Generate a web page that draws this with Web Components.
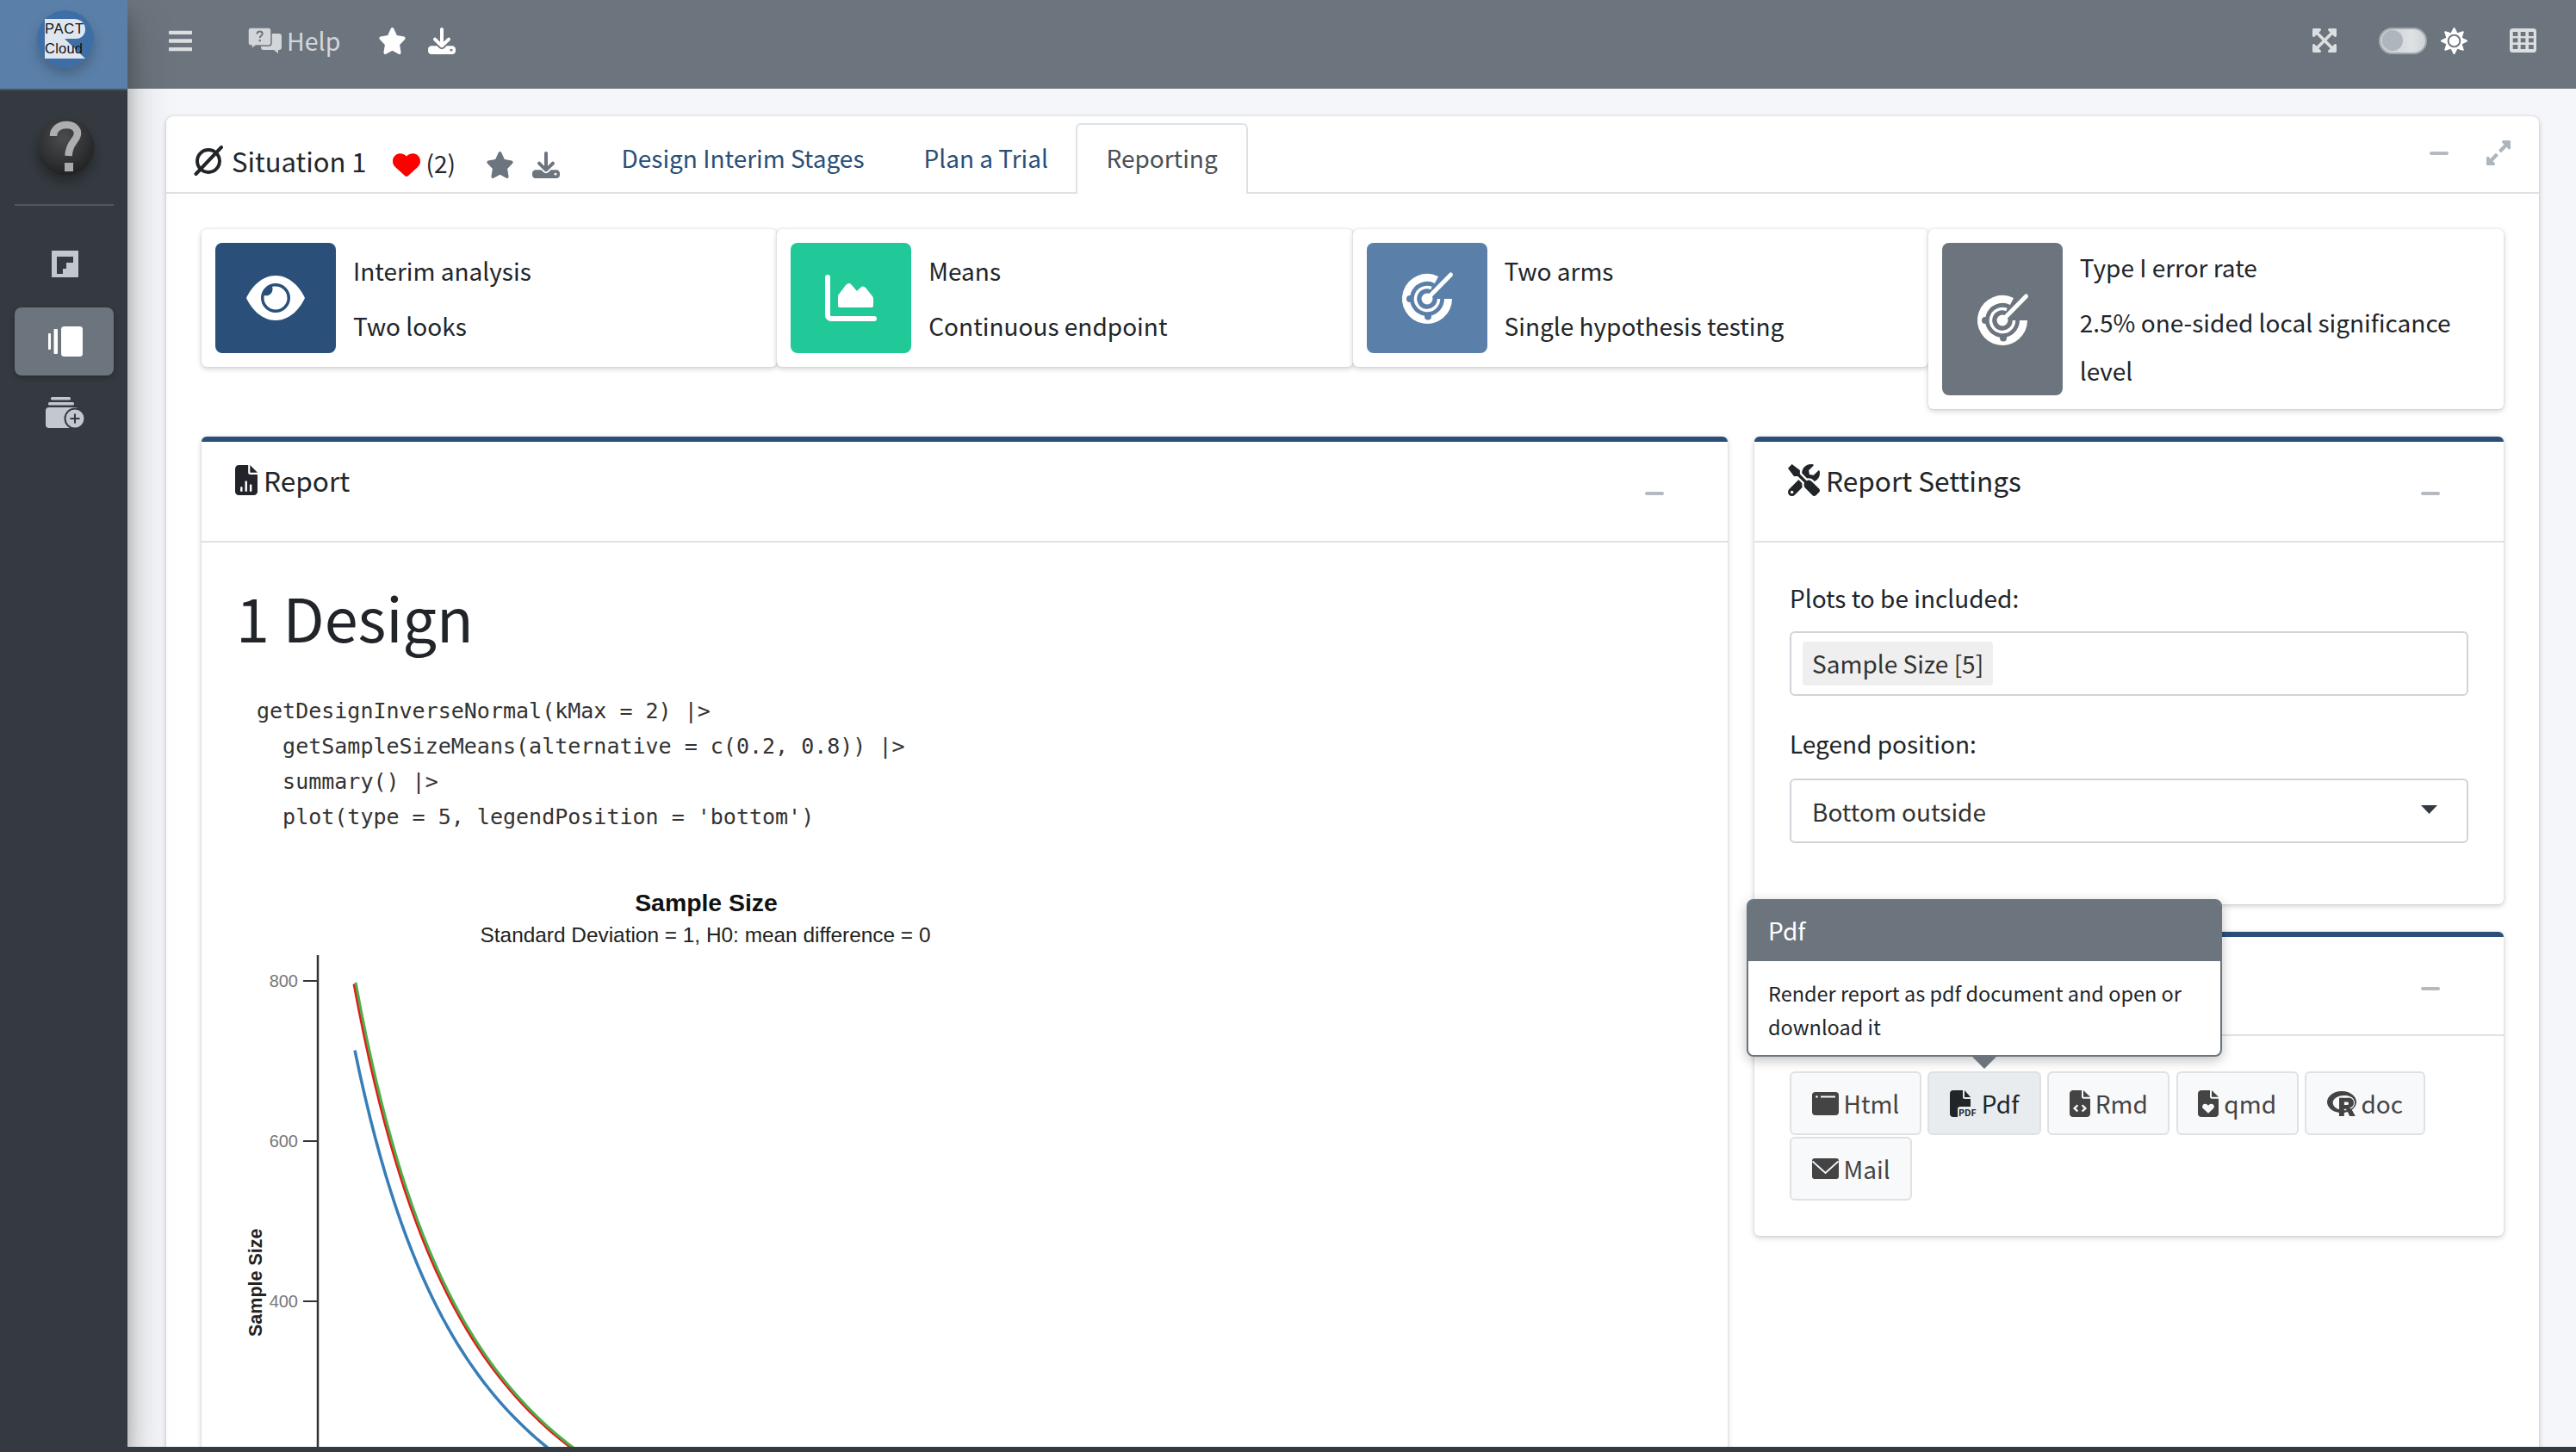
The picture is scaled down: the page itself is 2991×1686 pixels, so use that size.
<!DOCTYPE html>
<html lang="en">
<head>
<meta charset="utf-8">
<title>PACT Cloud</title>
<style>
    html, body { margin: 0; padding: 0; background: #f4f6f9; }
    body { font-family: "Noto Sans CJK SC", "Source Sans Pro", "Noto Sans", sans-serif; font-size: 28px; color: #212529; }
</style>
</head>
<body>

<pact-app>
    <pact-sidebar slot="side"></pact-sidebar>
    <pact-topbar slot="top"></pact-topbar>

    <pact-main-card>
        <pact-icon slot="title-icon" name="emptyset" w="34" h="35"></pact-icon>
        <span slot="title">Situation 1</span>

        <pact-tab slot="tabs">Design Interim Stages</pact-tab>
        <pact-tab slot="tabs">Plan a Trial</pact-tab>
        <pact-tab slot="tabs" active>Reporting</pact-tab>

        <pact-info-row>
            <pact-info-box bg="#2a4f78">
                <pact-icon slot="icon" name="eye" w="68" h="52"></pact-icon>
                <span>Interim analysis</span>
                <span slot="detail">Two looks</span>
            </pact-info-box>
            <pact-info-box bg="#20c997">
                <pact-icon slot="icon" name="chart" w="60" h="54"></pact-icon>
                <span>Means</span>
                <span slot="detail">Continuous endpoint</span>
            </pact-info-box>
            <pact-info-box bg="#5a7fa8">
                <pact-icon slot="icon" name="target" w="110" h="90"></pact-icon>
                <span>Two arms</span>
                <span slot="detail">Single hypothesis testing</span>
            </pact-info-box>
            <pact-info-box bg="#6c757d">
                <pact-icon slot="icon" name="target" w="110" h="90"></pact-icon>
                <span>Type I error rate</span>
                <span slot="detail">2.5% one-sided local significance level</span>
            </pact-info-box>
        </pact-info-row>

        <pact-columns>
            <pact-card slot="left" tall>
                <pact-icon slot="icon" name="filechart" w="26" h="35"></pact-icon>
                <span slot="title">Report</span>
                <pact-report></pact-report>
            </pact-card>

            <pact-card slot="right">
                <pact-icon slot="icon" name="tools" w="37" h="37"></pact-icon>
                <span slot="title">Report Settings</span>
                <pact-field label="Plots to be included:"><pact-chip>Sample Size [5]</pact-chip></pact-field>
                <pact-field label="Legend position:" select>Bottom outside</pact-field>
            </pact-card>

            <pact-card slot="right" class="downloads">
                <pact-button>
                    <pact-icon slot="icon" name="window" w="31" h="27"></pact-icon>Html
                </pact-button>
                <pact-button hover>
                    <pact-icon slot="icon" name="filepdf" w="31" h="31"></pact-icon>Pdf
                </pact-button>
                <pact-button>
                    <pact-icon slot="icon" name="filecode" w="24" h="31"></pact-icon>Rmd
                </pact-button>
                <pact-button>
                    <pact-icon slot="icon" name="fileheart" w="24" h="31"></pact-icon>qmd
                </pact-button>
                <pact-button>
                    <pact-icon slot="icon" name="rproject" w="34" h="29"></pact-icon>doc
                </pact-button>
                <pact-button>
                    <pact-icon slot="icon" name="mail" w="31" h="24"></pact-icon>Mail
                </pact-button>
                <pact-popover slot="overlay" heading="Pdf">Render report as pdf document and open or download it</pact-popover>
            </pact-card>
        </pact-columns>
    </pact-main-card>
</pact-app>

<script>
const FILE = 'M0 64C0 28.7 28.7 0 64 0H224V128c0 17.7 14.3 32 32 32H384V448c0 35.3-28.7 64-64 64H64c-35.3 0-64-28.7-64-64V64zm384 64H256V0L384 128z';

const ICONS = {
    bars: { box: '0 0 448 512', body: '<path d="M16 132h416c8.837 0 16-7.163 16-16V76c0-8.837-7.163-16-16-16H16C7.163 60 0 67.163 0 76v40c0 8.837 7.163 16 16 16zm0 160h416c8.837 0 16-7.163 16-16v-40c0-8.837-7.163-16-16-16H16c-8.837 0-16 7.163-16 16v40c0 8.837 7.163 16 16 16zm0 160h416c8.837 0 16-7.163 16-16v-40c0-8.837-7.163-16-16-16H16c-8.837 0-16 7.163-16 16v40c0 8.837 7.163 16 16 16z"/>' },
    star: { box: '0 0 576 512', body: '<path d="M316.9 18C311.6 7 300.4 0 288.1 0s-23.4 7-28.8 18L195 150.3 51.4 171.5c-12 1.8-22 10.2-25.7 21.7s-.7 24.2 7.9 32.7L137.8 329 113.2 474.7c-2 12 3 24.2 12.9 31.3s23 8 33.8 2.3l128.3-68.5 128.3 68.5c10.8 5.7 23.9 4.9 33.8-2.3s14.9-19.3 12.9-31.3L438.5 329 542.7 225.9c8.6-8.5 11.7-21.2 7.9-32.7s-13.7-19.9-25.7-21.7L381.2 150.3 316.9 18z"/>' },
    download: { box: '0 0 512 512', body: '<path d="M288 32c0-17.7-14.3-32-32-32s-32 14.3-32 32V274.7l-73.4-73.4c-12.5-12.5-32.8-12.5-45.3 0s-12.5 32.8 0 45.3l128 128c12.5 12.5 32.8 12.5 45.3 0l128-128c12.5-12.5 12.5-32.8 0-45.3s-32.8-12.5-45.3 0L288 274.7V32zM64 352c-35.3 0-64 28.7-64 64v32c0 35.3 28.7 64 64 64H448c35.3 0 64-28.7 64-64V416c0-35.3-28.7-64-64-64H346.5l-45.3 45.3c-25 25-65.5 25-90.5 0L165.5 352H64zm368 56a24 24 0 1 1 0 48 24 24 0 1 1 0-48z"/>' },
    heart: { box: '0 40 512 440', body: '<path d="M47.6 300.4L228.3 469.1c7.5 7 17.4 10.9 27.7 10.9s20.2-3.9 27.7-10.9L464.4 300.4c30.4-28.3 47.6-68 47.6-109.5v-5.8c0-69.9-50.5-129.5-119.4-141C347 36.5 300.6 51.4 268 84L256 96 244 84c-32.6-32.6-79-47.5-124.6-39.9C50.5 55.6 0 115.2 0 185.1v5.8c0 41.5 17.2 81.2 47.6 109.5z"/>' },
    help: { box: '0 0 39 30', body: `
        <path d="M18 7h18a3 3 0 0 1 3 3v13a3 3 0 0 1-3 3h-1v4l-5-4H18a3 3 0 0 1-3-3V10a3 3 0 0 1 3-3z"/>
        <path d="M3 0h21a3 3 0 0 1 3 3v15a3 3 0 0 1-3 3H9l-5 4v-4H3a3 3 0 0 1-3-3V3a3 3 0 0 1 3-3z" stroke="#6c757d" stroke-width="1.5"/>
        <path d="M10.500 7.500c0-2 1.500-3 3.200-3s3 1 3 2.700c0 2.300-3 2.300-3 4.800" fill="none" stroke="#6c757d" stroke-width="2"/>
        <circle cx="13.700" cy="15" r="1.300" fill="#6c757d"/>` },
    expandarrows: { box: '0 0 448 512', body: '<path d="M448 344v112a23.94 23.94 0 0 1-24 24H312c-21.39 0-32.09-25.9-17-41l36.2-36.2L224 295.6 116.77 402.9 153 439c15.09 15.1 4.39 41-17 41H24a23.94 23.94 0 0 1-24-24V344c0-21.4 25.89-32.1 41-17l36.19 36.2L184.46 256 77.18 148.7 41 185c-15.1 15.1-41 4.4-41-17V56a23.94 23.94 0 0 1 24-24h112c21.39 0 32.09 25.9 17 41l-36.2 36.2L224 216.4l107.23-107.3L295 73c-15.09-15.1-4.39-41 17-41h112a23.94 23.94 0 0 1 24 24v112c0 21.4-25.89 32.1-41 17l-36.19-36.2L263.54 256l107.28 107.3L407 327.1c15.1-15.2 41-4.5 41 16.9z"/>' },
    expandalt: { box: '0 32 448 448', body: '<path d="M212.686 315.314L120 408l32.922 31.029c15.12 15.12 4.412 40.971-16.97 40.971h-112C10.697 480 0 469.255 0 456V344c0-21.382 25.803-32.09 40.922-16.971L72 360l92.686-92.686c6.248-6.248 16.379-6.248 22.627 0l25.373 25.373c6.249 6.248 6.249 16.378 0 22.627zm22.628-118.628L328 104l-32.922-31.029C279.958 57.851 290.666 32 312.048 32h112C437.303 32 448 42.745 448 56v112c0 21.382-25.803 32.09-40.922 16.971L376 152l-92.686 92.686c-6.248 6.248-16.379 6.248-22.627 0l-25.373-25.373c-6.249-6.248-6.249-16.378 0-22.627z"/>' },
    sun: { box: '0 0 512 512', body: '<path d="M256 160c-52.9 0-96 43.1-96 96s43.1 96 96 96 96-43.1 96-96-43.1-96-96-96zm246.4 80.5l-94.7-47.3 33.5-100.4c4.5-13.6-8.4-26.5-21.9-21.9l-100.4 33.5-47.4-94.8c-6.4-12.8-24.6-12.8-31 0l-47.3 94.7L92.7 70.8c-13.6-4.5-26.5 8.4-21.9 21.9l33.5 100.4-94.7 47.4c-12.8 6.4-12.8 24.6 0 31l94.7 47.3-33.5 100.5c-4.5 13.6 8.4 26.5 21.9 21.9l100.4-33.5 47.3 94.7c6.4 12.8 24.6 12.8 31 0l47.3-94.7 100.4 33.5c13.6 4.5 26.5-8.4 21.9-21.9l-33.5-100.4 94.7-47.3c13-6.5 13-24.7.2-31.1zm-155.9 106c-49.9 49.9-131.1 49.9-181 0-49.9-49.9-49.9-131.1 0-181 49.9-49.9 131.1-49.9 181 0 49.9 49.9 49.9 131.1 0 181z"/>' },
    grid: { box: '0 0 31 28', body: `
        <rect width="31" height="28" rx="3.500"/>
        <g fill="#6c757d">
            <rect x="3.700" y="4" width="5.700" height="5"/><rect x="12.700" y="4" width="5.700" height="5"/><rect x="22" y="4" width="5.700" height="5"/>
            <rect x="3.700" y="11.300" width="5.700" height="5"/><rect x="12.700" y="11.300" width="5.700" height="5"/><rect x="22" y="11.300" width="5.700" height="5"/>
            <rect x="3.700" y="19" width="5.700" height="5"/><rect x="12.700" y="19" width="5.700" height="5"/><rect x="22" y="19" width="5.700" height="5"/>
        </g>` },
    emptyset: { box: '0 0 34 35', body: `
        <circle cx="17" cy="18" r="13" fill="none" stroke="currentColor" stroke-width="4"/>
        <path d="M2.500 33 L32 2" stroke="currentColor" stroke-width="4" stroke-linecap="round"/>` },
    eye: { box: '0 0 68 52', body: `
        <path d="M34 0C50 0 62 13 68 26C62 39 50 52 34 52C18 52 6 39 0 26C6 13 18 0 34 0z"/>
        <circle cx="34" cy="26" r="17" style="fill:var(--ic-bg)"/>
        <path d="M34 12.500a13.500 13.500 0 1 1-13.500 13.500c0-1 .1-2 .3-3a7.500 7.500 0 0 0 9.700-7.500c0-1-.2-2-.5-2.700a13.500 13.500 0 0 1 4-.3z"/>` },
    chart: { box: '0 0 60 54', body: `
        <path d="M3 3v44a4 4 0 0 0 4 4h50" fill="none" stroke="currentColor" stroke-width="6" stroke-linecap="round"/>
        <path d="M15 36V24L24 12Q28 8 31 12L37 19L41 15Q44 12 47 15L55 25Q56 26 56 28V36a2 2 0 0 1-2 2H17a2 2 0 0 1-2-2z"/>` },
    target: { box: '0 0 110 90', body: `
        <path d="M79.500 46A24.500 24.500 0 1 1 66 24" fill="none" stroke="currentColor" stroke-width="9"/>
        <path d="M68.500 46A13.500 13.500 0 1 1 60 33.500" fill="none" stroke="currentColor" stroke-width="3.500"/>
        <circle cx="35" cy="46" r="4" style="fill:var(--ic-bg)"/>
        <circle cx="56" cy="66.500" r="4" style="fill:var(--ic-bg)"/>
        <circle cx="55" cy="46" r="6.500"/>
        <path d="M55 46L82.500 18" fill="none" stroke="currentColor" stroke-width="5" stroke-linecap="round"/>` },
    filechart: { box: '0 0 384 512', body: `<path d="${FILE}"/>
        <g style="fill:var(--ic-bg)"><rect x="90" y="370" width="36" height="80" rx="6"/><rect x="170" y="270" width="36" height="180" rx="6"/><rect x="250" y="330" width="36" height="120" rx="6"/></g>` },
    tools: { box: '0 0 512 512', body: '<path d="M501.1 395.7L384 278.6c-23.1-23.1-57.6-27.6-85.4-13.9L192 158.1V96L64 0 0 64l96 128h62.1l106.6 106.6c-13.6 27.8-9.2 62.3 13.9 85.4l117.1 117.1c14.6 14.6 38.2 14.6 52.7 0l52.7-52.7c14.5-14.6 14.5-38.2 0-52.7zM331.7 225c28.3 0 54.9 11 74.9 31l19.4 19.4c15.8-6.9 30.8-16.5 43.8-29.5 37.1-37.1 49.7-89.3 37.9-136.7-2.2-9-13.5-12.1-20.1-5.5l-74.4 74.4-67.9-11.3L334 98.9l74.4-74.4c6.6-6.6 3.4-17.9-5.7-20.2-47.4-11.7-99.6.9-136.6 37.9-28.5 28.5-41.9 66.1-41.2 103.6l82.1 82.1c8.1-1.9 16.5-2.9 24.7-2.9zm-103.9 82l-56.7-56.7L18.7 402.8c-25 25-25 65.5 0 90.5s65.5 25 90.5 0l123.6-123.6c-7.6-19.9-9.9-41.6-5-62.7zM64 472c-13.2 0-24-10.800-24-24 0-13.300 10.700-24 24-24s24 10.700 24 24c0 13.200-10.700 24-24 24z"/>' },
    window: { box: '0 0 31 27', body: `
        <rect width="31" height="27" rx="4"/>
        <circle cx="5.500" cy="5.500" r="1.300" style="fill:var(--ic-bg)"/>
        <rect x="10" y="4.500" width="17" height="2" style="fill:var(--ic-bg)"/>` },
    filepdf: { box: '0 0 31 31', body: `
        <path d="M4 0H15V8a2 2 0 0 0 2 2h7V19H12a3 3 0 0 0-3 3V31H4a4 4 0 0 1-4-4V4a4 4 0 0 1 4-4zM24 8H17V0z"/>
        <text x="10" y="29.500" font-family="Noto Sans CJK SC, sans-serif" font-weight="700" font-size="10" textLength="20.500" lengthAdjust="spacingAndGlyphs">PDF</text>` },
    filecode: { box: '0 0 384 512', body: `<path d="${FILE}"/>
        <path d="M150 285l-60 60 60 60M234 285l60 60-60 60" fill="none" style="stroke:var(--ic-bg)" stroke-width="38"/>` },
    fileheart: { box: '0 0 384 512', body: `<path d="${FILE}"/>
        <path d="M192 440L95 345c-30-32-5-90 45-85 22 2 40 15 52 35 12-20 30-33 52-35 50-5 75 53 45 85z" style="fill:var(--ic-bg)"/>` },
    rproject: { box: '0 32 581 448', body: '<path d="M581 226.6C581 119.1 450.9 32 290.5 32S0 119.1 0 226.6C0 322.4 103.3 402 239.4 418.1V480h99.1v-61.5c24.3-2.7 47.6-7.4 69.4-13.9L448 480h112l-67.4-113.7c54.5-35.4 88.4-84.9 88.4-139.7zm-466.8 14.5c0-73.5 98.9-133 220.8-133s211.9 40.7 211.9 133c0 50.1-26.5 85-70.3 106.4-2.4-1.6-4.7-2.9-6.4-3.7-10.2-5.2-27.8-10.5-27.8-10.5s86.6-6.4 86.6-92.7-90.6-87.9-90.6-87.9h-199V361c-74.1-21.5-125.2-67.1-125.2-119.9zm225.1 38.3v-55.6c57.8 0 87.8-6.8 87.8 27.3 0 36.5-38.2 28.3-87.8 28.3zm-.9 72.5H365c10.8 0 18.9 11.7 24 19.2-16.1 1.9-33 2.8-50.6 2.9v-22.1z"/>' },
    mail: { box: '0 0 31 24', body: `
        <rect width="31" height="24" rx="3"/>
        <path d="M0.500 3.500L15.500 17L30.500 3.500" fill="none" style="stroke:var(--ic-bg)" stroke-width="1.800"/>` }
};

function tpl(html) {
    const template = document.createElement('template');
    template.innerHTML = html;
    return template;
}

class ShadowElement extends HTMLElement {
    constructor() {
        super();
        this.attachShadow({ mode: 'open' });
        this.shadowRoot.appendChild(this.constructor.template.content.cloneNode(true));
    }
}

class PactIcon extends HTMLElement {
    constructor() {
        super();
        this.attachShadow({ mode: 'open' });
    }

    connectedCallback() {
        const icon = ICONS[this.getAttribute('name')];
        const w = this.getAttribute('w');
        const h = this.getAttribute('h');
        this.shadowRoot.innerHTML = `
            <style>
                :host { display: inline-flex; flex: none; width: ${w}px; height: ${h}px; line-height: 0; }
                svg { width: 100%; height: 100%; fill: currentColor; display: block; }
            </style>
            <svg viewBox="${icon.box}" preserveAspectRatio="none">${icon.body}</svg>`;
    }
}

class PactApp extends ShadowElement {
    static template = tpl(`
        <style>
            :host { display: block; width: 2991px; height: 1686px; overflow: hidden; }
            .shell { display: grid; grid-template-columns: 148px 1fr; grid-template-rows: 103px 1577px 6px; height: 100%; }
            .side { grid-row: 1 / 3; grid-column: 1; z-index: 3; display: block; }
            .top { grid-row: 1; grid-column: 2; display: block; }
            .content { grid-row: 2; grid-column: 2; overflow: hidden; padding: 32px 43px 0 45px; background: #f4f6f9; box-sizing: border-box; }
            .foot { grid-row: 3; grid-column: 1 / 3; background: #343a40; z-index: 4; }
        </style>
        <div class="shell">
            <div class="side"><slot name="side"></slot></div>
            <div class="top"><slot name="top"></slot></div>
            <div class="content"><slot></slot></div>
            <div class="foot"></div>
        </div>
    `);
}

class PactSidebar extends ShadowElement {
    static template = tpl(`
        <style>
            :host { display: flex; flex-direction: column; height: 100%; background: #343a40; box-shadow: 0 27px 53px rgba(0,0,0,.25), 0 19px 19px rgba(0,0,0,.22); }
            .brand { height: 103px; background: #5a7fa8; border-bottom: 2px solid #4b545c; flex: none; }
            .brand svg, .avatar svg { display: block; }
            .avatar { padding-top: 31px; height: 101px; border-bottom: 2px solid #4f5962; margin: 0 16px 0 17px; flex: none; }
            .avatar svg { margin-left: -17px; }
            nav { display: flex; flex-direction: column; gap: 10px; padding: 29px 16px 0 17px; }
            .item { height: 79px; border-radius: 8px; display: flex; align-items: center; justify-content: center; box-sizing: border-box; }
            .item.active { background: #6c757d; box-shadow: 0 2px 6px rgba(0,0,0,.25); }
            .item svg { display: block; }
        </style>
        <div class="brand">
            <svg width="148" height="103" viewBox="0 0 148 103" style="filter:none">
                <defs>
                    <filter id="logo-shadow" x="-40%" y="-40%" width="180%" height="180%">
                        <feDropShadow dx="0" dy="8" stdDeviation="7" flood-color="#000" flood-opacity=".22"/>
                    </filter>
                </defs>
                <ellipse cx="76" cy="45" rx="33" ry="33" fill="#3c6ea5" filter="url(#logo-shadow)"/>
                <path d="M52 22H86C94 22 99 27 99 34C99 40 95 45 88 45H75L99 68H52z" fill="#e0e6ef"/>
                <text x="52" y="39" font-family="Liberation Sans, sans-serif" font-size="16.500" textLength="45" fill="#111">PACT</text>
                <text x="52" y="62" font-family="Liberation Sans, sans-serif" font-size="16.500" textLength="44" fill="#111">Cloud</text>
            </svg>
        </div>
        <div class="avatar">
            <svg width="148" height="90" viewBox="0 136 148 90">
                <defs>
                    <radialGradient id="ball" cx=".45" cy=".35" r=".7"><stop offset="0" stop-color="#4a4c4e"/><stop offset="1" stop-color="#1f2022"/></radialGradient>
                    <filter id="ball-shadow" x="-40%" y="-40%" width="180%" height="180%"><feDropShadow dx="0" dy="8" stdDeviation="7" flood-color="#000" flood-opacity=".3"/></filter>
                </defs>
                <circle cx="76.500" cy="170.500" r="33" fill="url(#ball)" filter="url(#ball-shadow)"/>
                <path d="M62 158C62 149 70 145 77 145C86 145 90 150 90 155C90 163 80 165 79.500 181" fill="none" stroke="#aeaeae" stroke-width="8.500"/>
                <rect x="75" y="189" width="10" height="10" fill="#a6aaaa"/>
            </svg>
        </div>
        <nav>
            <div class="item" style="padding-bottom:3px;padding-left:2px">
                <svg width="31" height="31" viewBox="0 0 31 31"><rect width="31" height="31" fill="#c2c7d0"/><path d="M6 7H25V14H17V21H13V27H6z" fill="#343a40"/></svg>
            </div>
            <div class="item active" style="padding-left:2px;padding-top:0">
                <svg width="40" height="35" viewBox="0 0 40 35" fill="#fff"><rect x="15" width="25" height="35" rx="3.500"/><rect x="0" y="8" width="3" height="19" rx="1"/><rect x="6.500" y="3" width="4.500" height="29" rx="1"/></svg>
            </div>
            <div class="item" style="padding-bottom:14px;padding-left:2px">
                <svg width="45" height="36" viewBox="0 0 45 36" fill="#c2c7d0">
                    <rect x="6" y="0" width="23" height="3.500" rx="1.500"/><rect x="3" y="6" width="30" height="3.500" rx="1.500"/><rect x="0" y="12" width="38" height="24" rx="4"/>
                    <circle cx="34" cy="25" r="11.500" stroke="#343a40" stroke-width="2"/>
                    <path d="M34 19.500v11M28.500 25h11" stroke="#343a40" stroke-width="2"/>
                </svg>
            </div>
        </nav>
    `);
}

class PactTopbar extends ShadowElement {
    static template = tpl(`
        <style>
            :host { display: flex; align-items: center; height: 103px; background: #6c757d; color: #dcdfe1; box-sizing: border-box; padding: 0 46px 9px 48px; }
            .bars { margin-right: 65px; color: #dcdfe1; }
            .help { display: flex; align-items: center; gap: 6px; margin-right: 44px; color: #d3d6d9; font-size: 28.500px; line-height: 38px; }
            .white { color: #fff; }
            .dl { margin-left: 25px; }
            .right { margin-left: auto; display: flex; align-items: center; }
            .toggle { width: 56px; height: 31px; box-sizing: border-box; margin: 0 16px 0 49px; border-radius: 16px; border: 2px solid #a3aab0; background: linear-gradient(90deg, #c9ccd0, #dfe2e4 70%, #cfd3d6); display: flex; align-items: center; padding-left: 2px; }
            .toggle i { display: block; width: 24px; height: 24px; border-radius: 50%; background: #adb5bd; }
            .grid { margin-left: 49px; }
        </style>
        <pact-icon class="bars" name="bars" w="27" h="31"></pact-icon>
        <div class="help"><pact-icon name="help" w="39" h="30"></pact-icon><span>Help</span></div>
        <pact-icon class="white" name="star" w="33" h="31"></pact-icon>
        <pact-icon class="white dl" name="download" w="32" h="31"></pact-icon>
        <div class="right">
            <pact-icon name="expandarrows" w="28" h="32"></pact-icon>
            <div class="toggle"><i></i></div>
            <pact-icon class="white" name="sun" w="31" h="31"></pact-icon>
            <pact-icon class="grid" name="grid" w="31" h="28"></pact-icon>
        </div>
    `);
}

class PactTab extends ShadowElement {
    static template = tpl(`
        <style>
            :host { display: block; margin-top: 8px; margin-bottom: -2px; padding: 0 32.500px; height: 82px; line-height: 77px; box-sizing: border-box; color: #2a4f78; border: 2px solid transparent; border-bottom: none; border-radius: 6px 6px 0 0; white-space: nowrap; }
            :host([active]) { color: #495057; background: #fff; border-color: #dee2e6; padding: 0 33px; margin-left: -2px; }
        </style>
        <slot></slot>
    `);
}

class PactMainCard extends ShadowElement {
    static template = tpl(`
        <style>
            :host { display: block; background: #fff; border-radius: 8px 8px 0 0; box-shadow: 0 0 2px rgba(0,0,0,.125), 0 2px 6px rgba(0,0,0,.2); min-height: 1700px; --ic-bg: #fff; }
            header { height: 90px; box-sizing: border-box; border-bottom: 2px solid #dee2e6; display: flex; align-items: flex-start; padding-left: 32px; }
            .title { display: flex; align-items: center; height: 88px; font-size: 31px; width: 462px; padding-top: 14px; box-sizing: border-box; white-space: nowrap; }
            .title .name { margin-left: 10px; }
            .likes { display: flex; align-items: center; font-size: 28px; margin-left: 30px; margin-top: 6px; }
            .likes pact-icon { color: #f00; margin-right: 7px; margin-top: 4px; }
            .gray { color: #6c757d; margin-top: 10px; }
            .tabs { display: flex; }
            .tools { margin-left: auto; display: flex; color: #adb5bd; padding-right: 33px; }
            .minus { width: 22px; height: 3.500px; background: #b4bac0; border-radius: 2px; margin: 41px 44px 0 0; }
            .tools pact-icon { margin-top: 28px; }
            .body { padding: 41px 41px 0 41px; }
        </style>
        <header>
            <div class="title">
                <slot name="title-icon"></slot>
                <span class="name"><slot name="title"></slot></span>
                <div class="likes"><pact-icon name="heart" w="32" h="27"></pact-icon><span>(2)</span></div>
                <pact-icon class="gray" style="margin-left:35px" name="star" w="33" h="31"></pact-icon>
                <pact-icon class="gray" style="margin-left:21px" name="download" w="32" h="31"></pact-icon>
            </div>
            <div class="tabs"><slot name="tabs"></slot></div>
            <div class="tools"><div class="minus"></div><pact-icon name="expandalt" w="28" h="29"></pact-icon></div>
        </header>
        <div class="body"><slot></slot></div>
    `);
}

class PactInfoRow extends ShadowElement {
    static template = tpl(`
        <style>
            :host { display: grid; grid-template-columns: repeat(4, 1fr); align-items: start; margin-bottom: 32px; }
        </style>
        <slot></slot>
    `);
}

class PactInfoBox extends ShadowElement {
    static template = tpl(`
        <style>
            :host { display: flex; background: #fff; border-radius: 6px; padding: 16px; box-shadow: 0 0 2px rgba(0,0,0,.125), 0 2px 6px rgba(0,0,0,.2); min-height: 128px; }
            .icon { flex: none; width: 140px; border-radius: 8px; display: flex; align-items: center; justify-content: center; color: #fff; }
            .text { flex: 1; display: flex; flex-direction: column; justify-content: center; padding-left: 20px; line-height: 56px; margin-bottom: 1px; }
            .detail { display: block; margin-top: 8px; }
        </style>
        <div class="icon"><slot name="icon"></slot></div>
        <div class="text">
            <div><slot></slot></div>
            <div class="detail"><slot name="detail"></slot></div>
        </div>
    `);

    connectedCallback() {
        const bg = this.getAttribute('bg');
        const icon = this.shadowRoot.querySelector('.icon');
        icon.style.background = bg;
        icon.style.setProperty('--ic-bg', bg);
    }
}

class PactColumns extends ShadowElement {
    static template = tpl(`
        <style>
            :host { display: grid; grid-template-columns: 1772px 870px; column-gap: 31px; align-items: start; }
            .col { display: flex; flex-direction: column; gap: 32px; }
        </style>
        <div class="col"><slot name="left"></slot></div>
        <div class="col"><slot name="right"></slot></div>
    `);
}

class PactCard extends ShadowElement {
    static template = tpl(`
        <style>
            :host { display: block; position: relative; background: #fff; border-top: 6px solid #2a4f78; border-radius: 6px; box-shadow: 0 0 2px rgba(0,0,0,.125), 0 2px 6px rgba(0,0,0,.2); }
            header { height: 117px; box-sizing: border-box; border-bottom: 2px solid #dee2e6; padding: 21px 74px 0 39px; display: flex; justify-content: space-between; align-items: flex-start; }
            :host(.downloads) header { height: 115px; }
            .title { display: flex; align-items: center; gap: 7px; font-size: 31.600px; line-height: 46px; }
            .minus { width: 22px; height: 3.500px; background: #b4bac0; border-radius: 2px; margin-top: 37px; }
            .body { padding: 41px 41px; }
            :host(.downloads) .body { display: flex; flex-wrap: wrap; column-gap: 7.500px; row-gap: 2px; }
            :host([tall]) .body { padding: 0; }
        </style>
        <header>
            <div class="title"><slot name="icon"></slot><slot name="title"></slot></div>
            <div class="minus"></div>
        </header>
        <div class="body"><slot></slot></div>
        <slot name="overlay"></slot>
    `);
}

class PactReport extends ShadowElement {
    static template = tpl(`
        <style>
            :host { display: block; }
            h1 { font-size: 70px; font-weight: 400; line-height: 91px; margin: 0 0 0 40px; padding-top: 40px; color: #212529; }
            pre { margin: 43.500px 0 0 64px; font-family: "DejaVu Sans Mono", "Liberation Mono", monospace; font-size: 25px; line-height: 41px; color: #333; }
        </style>
        <h1>1 Design</h1>
        <pre>getDesignInverseNormal(kMax = 2) |&gt;
  getSampleSizeMeans(alternative = c(0.2, 0.8)) |&gt;
  summary() |&gt;
  plot(type = 5, legendPosition = 'bottom')</pre>
        <pact-plot></pact-plot>
    `);
}

class PactPlot extends HTMLElement {
    constructor() {
        super();
        this.attachShadow({ mode: 'open' });
    }

    // n(x) = a / (x - x0)^2, same shape as the sample size formula
    curve(n0, dx) {
        const a = n0 * 272.4 * 272.4;
        const pts = [];
        for (let x = 412; x < 700; x += 6) {
            const n = a / ((x - 139.6) * (x - 139.6));
            pts.push(`${x + dx},${(1879 - 0.93 * n).toFixed(1)}`);
        }
        return pts.join(' ');
    }

    connectedCallback() {
        const tick = (y, label) => `
            <path d="M352 ${y}H369" stroke="#333" stroke-width="2"/>
            <text x="346" y="${y + 7}" text-anchor="end" font-size="20" fill="#777">${label}</text>`;
        this.shadowRoot.innerHTML = `
            <style>
                :host { display: block; margin-top: 52px; }
                svg { display: block; font-family: "Liberation Sans", sans-serif; }
            </style>
            <svg width="1772" height="700" viewBox="234 1020 1772 700">
                <text x="820" y="1057" text-anchor="middle" font-size="28.400" font-weight="700" fill="#111">Sample Size</text>
                <text x="819" y="1093" text-anchor="middle" font-size="24.400" fill="#222">Standard Deviation = 1, H0: mean difference = 0</text>
                <path d="M369 1108V1720" stroke="#333" stroke-width="2.500"/>
                ${tick(1138, '800')}${tick(1324, '600')}${tick(1510, '400')}
                <text transform="translate(304 1551) rotate(-90)" font-size="21.500" font-weight="700" fill="#222">Sample Size</text>
                <polyline points="${this.curve(710, 0)}" fill="none" stroke="#377eb8" stroke-width="3.500"/>
                <polyline points="${this.curve(793, -1)}" fill="none" stroke="#e41a1c" stroke-width="3"/>
                <polyline points="${this.curve(795, 1)}" fill="none" stroke="#4daf4a" stroke-width="3"/>
            </svg>`;
    }
}

class PactField extends ShadowElement {
    static template = tpl(`
        <style>
            :host { display: block; margin-bottom: 34px; }
            :host(:last-of-type) { margin-bottom: 30px; }
            label { display: block; line-height: 46px; margin-bottom: 16px; }
            :host([select]) label { margin-top: -2px; margin-bottom: 18px; }
            .box { height: 75px; box-sizing: border-box; border: 2px solid #ced4da; border-radius: 6px; display: flex; align-items: center; justify-content: space-between; padding: 0 34px 0 13px; color: #333; line-height: 40px; }
            :host([select]) .box { padding-left: 24px; }
            svg { display: none; }
            :host([select]) svg { display: block; margin-top: -3px; }
        </style>
        <label></label>
        <div class="box"><span><slot></slot></span><svg width="19" height="10" viewBox="0 0 19 10"><path d="M0 0H19L9.500 10z" fill="#343a40"/></svg></div>
    `);

    connectedCallback() {
        this.shadowRoot.querySelector('label').textContent = this.getAttribute('label');
    }
}

class PactChip extends ShadowElement {
    static template = tpl(`
        <style>
            :host { display: inline-block; background: #efefef; border-radius: 4px; padding: 0 11px; line-height: 51px; color: #333; vertical-align: middle; }
        </style>
        <slot></slot>
    `);
}

class PactButton extends ShadowElement {
    static template = tpl(`
        <style>
            :host { display: inline-flex; align-items: center; gap: 6px; height: 74px; box-sizing: border-box; padding: 0 23.500px; background: #f8f9fa; border: 2px solid #dfe1e3; border-radius: 6px; color: #444; --ic-bg: #f8f9fa; }
            :host([hover]) { background: #e9ecef; color: #212529; --ic-bg: #e9ecef; }
        </style>
        <slot name="icon"></slot><slot></slot>
    `);
}

class PactPopover extends ShadowElement {
    static template = tpl(`
        <style>
            :host { display: block; position: absolute; left: -9px; top: -44px; width: 552px; background: #fff; border: 2px solid #6c757d; border-radius: 8px; box-sizing: border-box; box-shadow: 0 4px 14px rgba(0,0,0,.25); font-size: 23.500px; z-index: 5; }
            .head { background: #6c757d; color: #fff; font-size: 28px; height: 70px; line-height: 68px; padding-left: 23px; border-radius: 5px 5px 0 0; }
            .text { padding: 17.500px 23px 13.500px; line-height: 39px; }
            .arrow { position: absolute; left: 258px; top: 100%; margin-top: 0; width: 0; height: 0; border: 16px solid transparent; border-top-color: #6c757d; border-bottom: none; }
        </style>
        <div class="head"></div>
        <div class="text"><slot></slot></div>
        <div class="arrow"></div>
    `);

    connectedCallback() {
        this.shadowRoot.querySelector('.head').textContent = this.getAttribute('heading');
    }
}

customElements.define('pact-icon', PactIcon);
customElements.define('pact-app', PactApp);
customElements.define('pact-sidebar', PactSidebar);
customElements.define('pact-topbar', PactTopbar);
customElements.define('pact-tab', PactTab);
customElements.define('pact-main-card', PactMainCard);
customElements.define('pact-info-row', PactInfoRow);
customElements.define('pact-info-box', PactInfoBox);
customElements.define('pact-columns', PactColumns);
customElements.define('pact-card', PactCard);
customElements.define('pact-report', PactReport);
customElements.define('pact-plot', PactPlot);
customElements.define('pact-field', PactField);
customElements.define('pact-chip', PactChip);
customElements.define('pact-button', PactButton);
customElements.define('pact-popover', PactPopover);
</script>
</body>
</html>
